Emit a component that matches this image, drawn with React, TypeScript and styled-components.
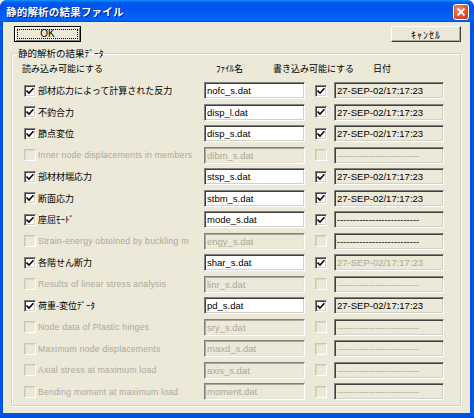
import React from "react";
import styled, { createGlobalStyle } from "styled-components";

const GlobalStyle = createGlobalStyle`
  html, body {
    margin: 0;
    padding: 0;
    background: #ffffff;
  }
  body {
    font-family: "Noto Sans CJK JP", sans-serif;
  }
`;

const DATE = "27-SEP-02/17:17:23";
const DASH = "--------------------------";

type Row = {
  label: string;
  file: string;
  enabled: boolean;
  date: string;
  dateGray: boolean;
  clip?: number;
};

const rows: Row[] = [
  { label: "部材応力によって計算された反力", file: "nofc_s.dat", enabled: true, date: DATE, dateGray: false },
  { label: "不釣合力", file: "disp_l.dat", enabled: true, date: DATE, dateGray: false },
  { label: "節点変位", file: "disp_s.dat", enabled: true, date: DATE, dateGray: false },
  { label: "Inner node displacements in members", file: "dibm_s.dat", enabled: false, date: DASH, dateGray: true },
  { label: "部材材端応力", file: "stsp_s.dat", enabled: true, date: DATE, dateGray: false },
  { label: "断面応力", file: "stbm_s.dat", enabled: true, date: DATE, dateGray: false },
  { label: "座屈ﾓｰﾄﾞ", file: "mode_s.dat", enabled: true, date: DASH, dateGray: false },
  { label: "Strain-energy obteined by buckling mode", file: "engy_s.dat", enabled: false, date: DASH, dateGray: false, clip: 151 },
  { label: "各階せん断力", file: "shar_s.dat", enabled: true, date: DATE, dateGray: true },
  { label: "Results of linear stress analysis", file: "linr_s.dat", enabled: false, date: DASH, dateGray: true },
  { label: "荷重-変位ﾃﾞｰﾀ", file: "pd_s.dat", enabled: true, date: DATE, dateGray: false },
  { label: "Node data of Plastic hinges", file: "sry_s.dat", enabled: false, date: DASH, dateGray: true },
  { label: "Maximum node displacements", file: "maxd_s.dat", enabled: false, date: DASH, dateGray: true },
  { label: "Axial stress at maximum load", file: "axis_s.dat", enabled: false, date: DASH, dateGray: true },
  { label: "Bending moment at maximum load", file: "moment.dat", enabled: false, date: DASH, dateGray: true },
];

const isLatin = (s: string) => /^[\x00-\x7f]+$/.test(s);

const CheckBox = ({ checked, disabled }: { checked: boolean; disabled: boolean }) => (
  <Box $disabled={disabled}>
    {checked && (
      <svg width="8" height="8" viewBox="0 0 8 8">
        <path d="M0.5 3.5 L3 6 L7.5 1.2" fill="none" stroke="#000" strokeWidth="1.6" />
      </svg>
    )}
  </Box>
);

const App = () => {
  return (
    <>
      <GlobalStyle />
      <Window>
        <TitleBar>
          <Title>静的解析の結果ファイル</Title>
          <CloseButton>
            <svg width="10" height="10" viewBox="0 0 10 10">
              <path d="M1.5 1.5 L8.5 8.5 M8.5 1.5 L1.5 8.5" stroke="#fff" strokeWidth="1.8" />
            </svg>
          </CloseButton>
        </TitleBar>
        <Body>
          <ButtonBar>
            <DefaultButton>
              <FocusRing>OK</FocusRing>
            </DefaultButton>
            <Button>ｷｬﾝｾﾙ</Button>
          </ButtonBar>
          <Group>
            <Legend>静的解析の結果ﾃﾞｰﾀ</Legend>
            <Header>
              <HeadCell $w={194}>読み込み可能にする</HeadCell>
              <HeadCell $w={57}>ﾌｧｲﾙ名</HeadCell>
              <HeadCell $w={100}>書き込み可能にする</HeadCell>
              <HeadCell $w={40}>日付</HeadCell>
            </Header>
            <List>
              {rows.map((r) => (
                <RowLine key={r.file}>
                  <ReadCell>
                    <CheckBox checked={r.enabled} disabled={!r.enabled} />
                    <Label
                      $disabled={!r.enabled}
                      $latin={isLatin(r.label)}
                      $clip={r.clip ?? 166}
                    >
                      {r.label}
                    </Label>
                  </ReadCell>
                  <FileField $disabled={!r.enabled}>{r.file}</FileField>
                  <WriteCell>
                    <CheckBox checked={r.enabled} disabled={!r.enabled} />
                  </WriteCell>
                  <DateField $gray={r.dateGray}>{r.date}</DateField>
                </RowLine>
              ))}
            </List>
          </Group>
        </Body>
      </Window>
    </>
  );
};

export default App;

const Window = styled.div`
  width: 474px;
  height: 418px;
  display: flex;
  flex-direction: column;
  box-sizing: border-box;
  background: #0054e3;
  border-radius: 7px 7px 0 0;
  overflow: hidden;
`;

const TitleBar = styled.div`
  height: 22px;
  flex: none;
  display: flex;
  align-items: center;
  justify-content: space-between;
  padding: 0 5px 0 6px;
  background: linear-gradient(
    to bottom,
    #0997ff 0%,
    #0058ee 12%,
    #0053ee 40%,
    #0062f7 80%,
    #0066ff 92%,
    #0047dc 100%
  );
`;

const Title = styled.div`
  color: #ffffff;
  font-size: 10.5px;
  font-weight: bold;
  letter-spacing: 0.2px;
  text-shadow: 1px 1px 0 #0a1e80;
  padding-top: 1px;
`;

const CloseButton = styled.div`
  width: 16px;
  height: 16px;
  box-sizing: border-box;
  border: 1px solid #ffffff;
  border-radius: 3px;
  background: radial-gradient(circle at 35% 30%, #f08d6f 0%, #e0532c 55%, #c63310 100%);
  display: flex;
  align-items: center;
  justify-content: center;
  margin-top: 1px;
`;

const Body = styled.div`
  flex: 1;
  margin: 0 4px 5px 3px;
  background: #ece9d8;
  display: flex;
  flex-direction: column;
  padding: 4px 9px 0 8px;
  box-sizing: border-box;
`;

const ButtonBar = styled.div`
  display: flex;
  justify-content: space-between;
  align-items: center;
  padding-left: 3px;
  height: 16px;
`;

const Button = styled.div`
  width: 70px;
  height: 16px;
  box-sizing: border-box;
  background: #ece9d8;
  border: 1px solid;
  border-color: #ffffff #404040 #404040 #ffffff;
  box-shadow: inset -1px -1px 0 #aca899;
  font-size: 10px;
  letter-spacing: 1px;
  display: flex;
  align-items: center;
  justify-content: center;
  color: #000;
`;

const DefaultButton = styled(Button)`
  width: 67px;
  border: 1px solid #000;
  box-shadow: inset 1px 1px 0 #ffffff, inset -1px -1px 0 #808080;
  padding: 2px;
  font-family: "Liberation Sans", sans-serif;
  font-size: 10px;
  letter-spacing: 0;
`;

const FocusRing = styled.div`
  flex: 1;
  align-self: stretch;
  border: 1px dotted #000;
  display: flex;
  align-items: center;
  justify-content: center;
  line-height: 1;
`;

const Group = styled.fieldset`
  margin: 5px 0 7px 0;
  padding: 0 0 0 12px;
  flex: 1;
  border: 1px solid #d0d0bf;
  border-radius: 2px;
  box-shadow: 1px 1px 0 #ffffff, inset 1px 1px 0 #ffffff;
  min-width: 0;
`;

const Legend = styled.legend`
  font-size: 9.5px;
  color: #000;
  padding: 0 1px;
  margin-left: -7px;
  line-height: 12px;
`;

const Header = styled.div`
  display: flex;
  height: 18px;
  align-items: center;
  margin-left: -2px;
`;

const HeadCell = styled.div<{ $w: number }>`
  width: ${(p) => p.$w}px;
  font-size: 9px;
  white-space: nowrap;
  color: #000;
`;

const List = styled.div`
  display: grid;
  grid-auto-rows: 21.5px;
  margin-top: 3px;
`;

const RowLine = styled.div`
  display: grid;
  grid-template-columns: 180px 101px 29px 110px;
  align-items: center;
`;

const ReadCell = styled.div`
  display: flex;
  align-items: center;
  gap: 2px;
  overflow: hidden;
  white-space: nowrap;
`;

const WriteCell = styled.div`
  display: flex;
  padding-left: 10px;
`;

const Box = styled.span<{ $disabled: boolean }>`
  width: 12px;
  height: 12px;
  flex: none;
  box-sizing: border-box;
  display: flex;
  align-items: center;
  justify-content: center;
  background: ${(p) => (p.$disabled ? "#ece9d8" : "#ffffff")};
  border: 1px solid;
  border-color: ${(p) =>
    p.$disabled ? "#c9c6b6 #ffffff #ffffff #c9c6b6" : "#808080 #ffffff #ffffff #808080"};
  box-shadow: ${(p) =>
    p.$disabled
      ? "inset 1px 1px 0 #dcd9c8"
      : "inset 1px 1px 0 #404040, inset -1px -1px 0 #d4d0c8"};
`;

const Label = styled.span<{ $disabled: boolean; $latin: boolean; $clip: number }>`
  font-family: ${(p) =>
    p.$latin ? `"Liberation Sans", sans-serif` : `"Noto Sans CJK JP", sans-serif`};
  font-size: ${(p) => (p.$latin ? "8.7px" : "9px")};
  letter-spacing: ${(p) => (p.$latin ? "0.2px" : "0")};
  color: ${(p) => (p.$disabled ? "#aca899" : "#000000")};
  overflow: hidden;
  max-width: ${(p) => p.$clip}px;
`;

const Field = styled.div`
  height: 17px;
  box-sizing: border-box;
  border: 1px solid;
  border-color: #808080 #ffffff #ffffff #808080;
  box-shadow: inset 1px 1px 0 #404040, inset -1px -1px 0 #d4d0c8;
  font-family: "Liberation Sans", sans-serif;
  font-size: 9.5px;
  display: flex;
  align-items: center;
  padding: 0 2px;
  white-space: nowrap;
  overflow: hidden;
`;

const FileField = styled(Field)<{ $disabled: boolean }>`
  background: ${(p) => (p.$disabled ? "#ece9d8" : "#ffffff")};
  color: ${(p) => (p.$disabled ? "#aca899" : "#000000")};
  box-shadow: ${(p) =>
    p.$disabled
      ? "inset 1px 1px 0 #aca899, inset -1px -1px 0 #e8e5d6"
      : "inset 1px 1px 0 #404040, inset -1px -1px 0 #d4d0c8"};
`;

const DateField = styled(Field)<{ $gray: boolean }>`
  background: #ece9d8;
  color: ${(p) => (p.$gray ? "#aca899" : "#000000")};
`;
